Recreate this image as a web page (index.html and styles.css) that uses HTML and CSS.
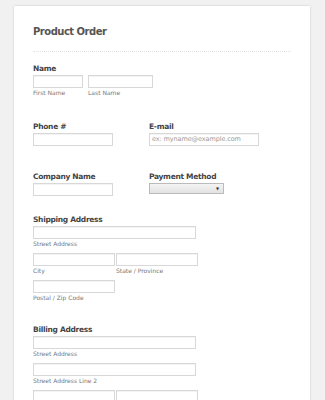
FILE: index.html
```html
<!DOCTYPE html>
<html lang="en">
<head>
  <meta charset="UTF-8">
  <title>Product Order</title>
  <link rel="stylesheet" href="styles.css">
</head>
<body>
  <div class="card">
    <h1 class="title">Product Order</h1>

    <!-- Name -->
    <div class="field field-name">
      <div class="label">Name</div>
      <div class="row">
        <div class="col">
          <div class="input w50"></div>
          <div class="sub">First Name</div>
        </div>
        <div class="col">
          <div class="input w65"></div>
          <div class="sub">Last Name</div>
        </div>
      </div>
    </div>

    <div class="pair field-phone">
      <div class="half">
        <div class="label">Phone #</div>
        <div class="input w80"></div>
      </div>
      <div class="half">
        <div class="label">E-mail</div>
        <div class="input w110 placeholder">ex: myname@example.com</div>
      </div>
    </div>

    <div class="pair field-company">
      <div class="half">
        <div class="label">Company Name</div>
        <div class="input w80"></div>
      </div>
      <div class="half">
        <div class="label">Payment Method</div>
        <div class="select"><span class="arrow">&#9660;</span></div>
      </div>
    </div>

    <!-- Shipping -->
    <div class="field field-ship">
      <div class="label">Shipping Address</div>
      <div class="input wfull"></div>
      <div class="sub">Street Address</div>
      <div class="row tight">
        <div class="col">
          <div class="input w82"></div>
          <div class="sub">City</div>
        </div>
        <div class="col">
          <div class="input w82"></div>
          <div class="sub">State / Province</div>
        </div>
      </div>
      <div class="input w82"></div>
      <div class="sub">Postal / Zip Code</div>
    </div>

    <!-- Billing -->
    <div class="field field-bill">
      <div class="label">Billing Address</div>
      <div class="input wfull"></div>
      <div class="sub">Street Address</div>
      <div class="input wfull"></div>
      <div class="sub">Street Address Line 2</div>
      <div class="row tight">
        <div class="col">
          <div class="input w82"></div>
          <div class="sub">City</div>
        </div>
        <div class="col">
          <div class="input w82"></div>
          <div class="sub">State / Province</div>
        </div>
      </div>
      <div class="input w82"></div>
      <div class="sub">Postal / Zip Code</div>
    </div>
  </div>
</body>
</html>
```

FILE: styles.css
```css
body {
  margin: 0;
  padding: 6px 0 0;
  background-color: #f1f1f1;
  font-family: "DejaVu Sans", Verdana, sans-serif;
  color: #444;
}

.card {
  margin-left: 14px;
  width: 258px;
  padding: 19px 19px 40px;
  background-color: #fff;
  box-shadow: 0 0 2px rgba(0, 0, 0, 0.18);
}

.title {
  margin: 0;
  padding-bottom: 12px;
  font-size: 10px;
  line-height: 14px;
  font-weight: bold;
  letter-spacing: -0.5px;
  color: #555;
  border-bottom: 1px dotted #e2e2e2;
}

.label {
  font-size: 7.5px;
  line-height: 10px;
  font-weight: bold;
  letter-spacing: -0.3px;
  color: #444;
  margin-bottom: 1px;
}

.sub {
  font-size: 6px;
  line-height: 8px;
  color: #777;
  margin-top: 1px;
}

.row {
  display: flex;
  gap: 5px;
}

.row.tight {
  gap: 1px;
  margin-top: 5px;
  margin-bottom: 5px;
}

.input {
  height: 11px;
  border: 1px solid #d8d8d8;
  background-color: #fff;
  box-shadow: inset 0 1px 0 #f3f3f3;
}

.placeholder {
  font-size: 6.5px;
  line-height: 11px;
  color: #999;
  padding-left: 2px;
  box-sizing: border-box;
  height: 13px;
  letter-spacing: -0.1px;
}

.w50 { width: 48px; }
.w65 { width: 63px; }
.w80 { width: 78px; }
.w82 { width: 80px; }
.w110 { width: 110px; }
.wfull { width: 161px; }

.input.wfull + .sub + .input.wfull {
  margin-top: 5px;
}

.pair {
  display: flex;
}

.half {
  width: 116px;
}

.select {
  position: relative;
  width: 73px;
  height: 9px;
  border: 1px solid #bbb;
  background: linear-gradient(#f4f4f4, #e2e2e2);
}

.arrow {
  position: absolute;
  right: 4px;
  top: 1px;
  font-size: 4px;
  line-height: 7px;
  color: #333;
}

.field-name { margin-top: 12px; }
.field-phone { margin-top: 25px; }
.field-company { margin-top: 26px; }
.field-ship { margin-top: 19px; }
.field-bill { margin-top: 23px; }
```
